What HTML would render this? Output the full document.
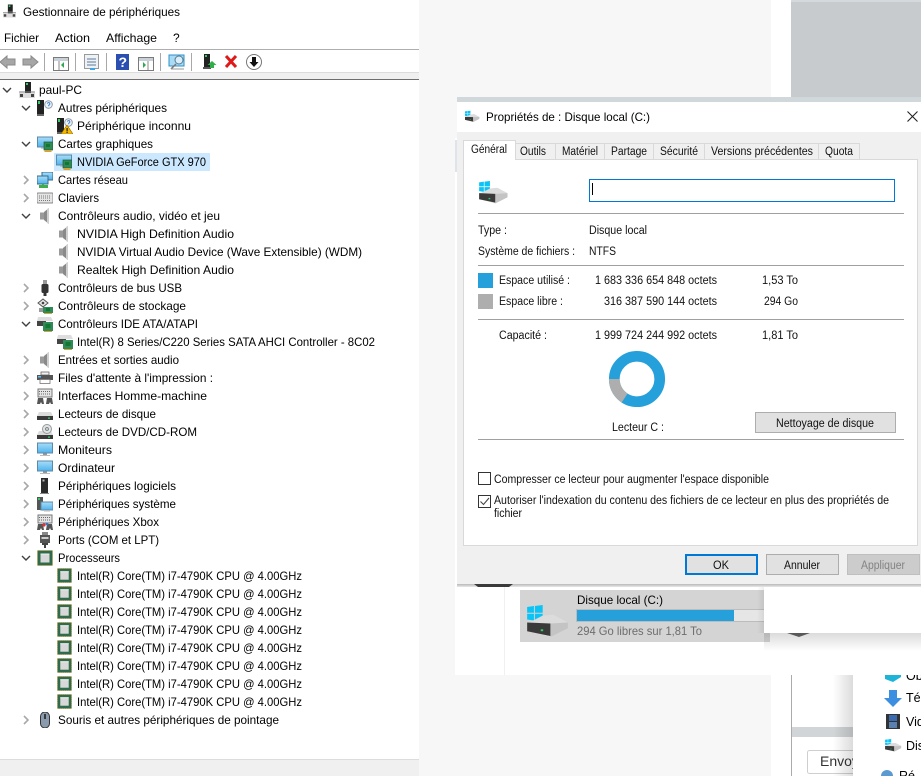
<!DOCTYPE html>
<html lang="fr"><head><meta charset="utf-8"><title>Gestionnaire de périphériques</title>
<style>
html,body{margin:0;padding:0;background:#fff;width:921px;height:776px;overflow:hidden}
svg{display:block;position:absolute;left:0;top:0}
text{font-family:"Liberation Sans",sans-serif;font-size:12px;fill:#000}
.d{font-size:11.5px;fill:#111}
</style></head><body>
<svg width="921" height="776" viewBox="0 0 921 776" xmlns="http://www.w3.org/2000/svg">
<defs>
<linearGradient id="sh" x1="0" y1="0" x2="0" y2="1"><stop offset="0" stop-color="#000" stop-opacity=".14"/><stop offset="1" stop-color="#000" stop-opacity="0"/></linearGradient>
<linearGradient id="shx" x1="0" y1="0" x2="1" y2="0"><stop offset="0" stop-color="#000" stop-opacity="0"/><stop offset="1" stop-color="#000" stop-opacity=".14"/></linearGradient>
<linearGradient id="band" x1="0" y1="0" x2="0" y2="1"><stop offset="0" stop-color="#b8b8b8"/><stop offset="1" stop-color="#e8e8e8"/></linearGradient>
<linearGradient id="scr" x1="0" y1="0" x2="0" y2="1"><stop offset="0" stop-color="#a8ddf8"/><stop offset="1" stop-color="#4fb3ee"/></linearGradient>
<symbol id="o" viewBox="0 0 10 10"><path d="M1 3l4 4 4-4" fill="none" stroke="#404040" stroke-width="1.400"/></symbol>
<symbol id="c" viewBox="0 0 10 10"><path d="M3 1l4 4-4 4" fill="none" stroke="#a8a8a8" stroke-width="1.600"/></symbol>
<symbol id="pc" viewBox="0 0 16 16"><rect x="6" y="0" width="6" height="9" fill="#222"/><rect x="7" y="1" width="2" height="2" fill="#3c6"/><path d="M0 10q0-1 1-1h14q1 0 1 1v6H0z" fill="#ddd"/><path d="M0 9.500h16v1H0z" fill="#999"/><rect x="1" y="12" width="3" height="3" fill="#444"/><rect x="12" y="12" width="3" height="3" fill="#444"/><rect x="6" y="9" width="6" height="2" fill="#555"/></symbol>
<symbol id="unk" viewBox="0 0 16 16"><rect x="0" y="0" width="7" height="14" fill="#222"/><rect x="1" y="1" width="2" height="3" fill="#3c6"/><rect x="0" y="14" width="7" height="2" fill="#666"/><circle cx="11.500" cy="4.500" r="3.800" fill="#eef3f8" stroke="#8a9aae"/><path d="M10.300 3.600a1.300 1.300 0 1 1 1.400 1.600V6.300" fill="none" stroke="#3a78c8" stroke-width=".9"/></symbol>
<symbol id="unkw" viewBox="0 0 16 16"><use href="#unk" width="16" height="16"/><path d="M10 7l6 9H4z" fill="#f5b800" stroke="#8a6a00" stroke-width=".6"/><rect x="9.500" y="10" width="1.200" height="3.200" fill="#222"/><rect x="9.500" y="13.800" width="1.200" height="1.200" fill="#222"/></symbol>
<symbol id="gpu" viewBox="0 0 16 16"><rect x=".5" y="1" width="15" height="10" fill="url(#scr)" stroke="#5a8aa8"/><rect x="4" y="11" width="5" height="1.500" fill="#9aa"/><rect x="7" y="6" width="9" height="8" fill="#2f8a58" stroke="#1d5c3a" stroke-width=".7"/><rect x="9" y="8" width="4" height="3" fill="#173"/><path d="M7.500 14h7v2h-7z" fill="#d2a43a"/></symbol>
<symbol id="net" viewBox="0 0 16 16"><rect x="5" y="0" width="11" height="8" fill="url(#scr)" stroke="#3a6a88"/><rect x="0" y="4" width="11" height="8" fill="url(#scr)" stroke="#3a6a88"/><path d="M5 12h2v1h4v3H2v-3h3z" fill="#3cae50"/></symbol>
<symbol id="kbd" viewBox="0 0 16 16"><rect x="0" y="3" width="16" height="10" rx="1" fill="#e4e4e4" stroke="#8a8a8a"/><path d="M2 6h12M2 8h12M2 10.500h12" stroke="#777" stroke-width="1" stroke-dasharray="1 1"/></symbol>
<symbol id="spk" viewBox="0 0 16 16"><path d="M3 4.500h4v7H3z" fill="#9a9a9a"/><path d="M7 4l5-4v16l-5-4z" fill="#8a8a8a"/><path d="M10 1l2-1v16l-2-1z" fill="#cfcfcf"/></symbol>
<symbol id="usb" viewBox="0 0 16 16"><rect x="6" y="0" width="4" height="4" fill="#999"/><rect x="4.500" y="4" width="7" height="9" rx="1.500" fill="#333"/><rect x="6.500" y="13" width="3" height="3" fill="#333"/></symbol>
<symbol id="stor" viewBox="0 0 16 16"><path d="M1 5l5-4 5 4-5 4z" fill="#e6e6e6" stroke="#555"/><circle cx="6" cy="5" r="1.300" fill="#444"/><rect x="6" y="9" width="10" height="6" fill="#2f8a58"/><rect x="9" y="10" width="4" height="3" fill="#173"/><path d="M7 15h8v1H7z" fill="#d2a43a"/><rect x="2" y="10" width="4" height="4" fill="#999"/></symbol>
<symbol id="ide" viewBox="0 0 16 16"><path d="M1 1h13l2 4H0z" fill="#ddd"/><rect x="0" y="5" width="9" height="5" fill="#444"/><rect x="6" y="6" width="10" height="9" fill="#2f8a58"/><rect x="8.500" y="8" width="5" height="4" fill="#173"/><path d="M7 15h8v1H7z" fill="#d2a43a"/></symbol>
<symbol id="prn" viewBox="0 0 16 16"><rect x="4" y="2" width="8" height="3" fill="#f2f2f2" stroke="#666" stroke-width=".8"/><rect x="0" y="5" width="16" height="5" fill="#555"/><rect x="1" y="6" width="3" height="1.500" fill="#5bc0ee"/><rect x="3" y="9.500" width="10" height="4" fill="#fff" stroke="#777" stroke-width=".8"/></symbol>
<symbol id="hid" viewBox="0 0 16 16"><rect x="1" y="1" width="14" height="8" fill="#e4e4e4" stroke="#777"/><path d="M2 3.500h12M2 6h12" stroke="#666" stroke-dasharray="1 1"/><path d="M1 10h5l1 6H5l-1-2-1 2H0zM10 10h5l1 6h-2l-1-2-1 2H9z" fill="#555"/></symbol>
<symbol id="xbox" viewBox="0 0 16 16"><use href="#hid" width="16" height="16"/><circle cx="7" cy="11" r="1.600" fill="#d33"/><circle cx="10" cy="10" r="1.400" fill="#37c"/></symbol>
<symbol id="hdd" viewBox="0 0 16 16"><path d="M2 6h12l2 4H0z" fill="#dcdcdc"/><rect x="0" y="10" width="16" height="4" fill="#3a3a3a"/><rect x="11" y="11.500" width="2" height="1.300" fill="#3c6"/></symbol>
<symbol id="dvd" viewBox="0 0 16 16"><use href="#hdd" width="16" height="16" y="1"/><circle cx="10" cy="5" r="4.500" fill="#dfe6e8" stroke="#999"/><circle cx="10" cy="5" r="1.400" fill="#fff" stroke="#777"/></symbol>
<symbol id="mon" viewBox="0 0 16 16"><rect x=".5" y="1" width="15" height="10" fill="url(#scr)" stroke="#5a8aa8"/><rect x="6" y="11.500" width="4" height="1.500" fill="#999"/><rect x="3" y="13" width="10" height="1" fill="#bbb"/></symbol>
<symbol id="soft" viewBox="0 0 16 16"><rect x="4" y="0" width="7" height="15" fill="#2a2a2a"/><rect x="5.500" y="1.500" width="2" height="2" fill="#bbb"/><rect x="3" y="15" width="9" height="1" fill="#888"/></symbol>
<symbol id="sys" viewBox="0 0 16 16"><rect x="0" y="1" width="6" height="13" fill="#555"/><rect x="1" y="2" width="2" height="2" fill="#3c6"/><rect x="4" y="6" width="12" height="8" fill="url(#scr)" stroke="#5a8aa8"/><rect x="7" y="14" width="6" height="1.500" fill="#bbb"/></symbol>
<symbol id="port" viewBox="0 0 16 16"><rect x="5" y="0" width="6" height="3" fill="#888"/><rect x="3" y="3" width="10" height="8" fill="#555"/><rect x="4.500" y="5" width="7" height="2" fill="#ccc"/><path d="M5 11h6v2H9v3H7v-3H5z" fill="#444"/></symbol>
<symbol id="cpu" viewBox="0 0 16 16"><rect x=".5" y=".5" width="15" height="15" fill="#2f6b4c" stroke="#b8963c" stroke-dasharray="1 1"/><rect x="3.500" y="3.500" width="9" height="9" fill="#d8d8d8"/><rect x="3.500" y="3.500" width="9" height="1" fill="#f2f2f2"/></symbol>
<symbol id="mouse" viewBox="0 0 16 16"><rect x="3.500" y="0" width="9" height="16" rx="4.500" fill="#8b9bae" stroke="#333"/><rect x="7.200" y="2" width="1.600" height="5" fill="#222"/></symbol>
<symbol id="win" viewBox="0 0 44 34"><path d="M0 2l7-1v7H0zM8 1l8-1v8H8zM0 9h7v7l-7-1zM8 9h8v8l-8-1z" fill="#0cc3f5"/><path d="M16 11l11-1 15 8v6L24 33 0 27v-8z" fill="#dcdcdc"/><path d="M0 18l24 1v13L0 27z" fill="#3a3a3a"/><path d="M24 19l18-1v6L24 33z" fill="#c4c4c4"/><rect x="14" y="25" width="2.500" height="2" fill="#3c6"/></symbol>
</defs>

<!-- backgrounds -->
<rect width="921" height="776" fill="#fff"/>
<rect x="419" y="0" width="352" height="776" fill="#f7f7f7"/>
<rect x="791" y="0" width="130" height="98" fill="#c8cbce"/>
<rect x="791" y="0" width="130" height="2" fill="#d4d9dd"/>

<!-- device manager chrome -->
<rect x="0" y="49" width="419" height="1" fill="#aeaeae"/>
<rect x="0" y="72" width="419" height="7" fill="#f0f0f0"/>
<rect x="0" y="72" width="419" height="1" fill="#dcdcdc"/>
<rect x="0" y="79" width="419" height="1" fill="#6e6e6e"/>
<rect x="0" y="759" width="419" height="1" fill="#dcdcdc"/>
<rect x="0" y="760" width="419" height="16" fill="#f0f0f0"/>

<use href="#pc" x="3" y="3" width="13" height="16"/>
<text x="23" y="16" textLength="157" lengthAdjust="spacingAndGlyphs">Gestionnaire de périphériques</text>
<text x="4" y="42" textLength="35" lengthAdjust="spacingAndGlyphs">Fichier</text>
<text x="55" y="42" textLength="35" lengthAdjust="spacingAndGlyphs">Action</text>
<text x="106" y="42" textLength="51" lengthAdjust="spacingAndGlyphs">Affichage</text>
<text x="173" y="42">?</text>

<!-- toolbar -->
<path d="M0 62l7-6v3h8v6H7v3z" fill="#a6a6a6" stroke="#8a8a8a"/>
<path d="M38 62l-7-6v3h-8v6h8v3z" fill="#a6a6a6" stroke="#8a8a8a"/>
<g fill="#a8a8a8"><rect x="44" y="53" width="1" height="18"/><rect x="75" y="53" width="1" height="18"/><rect x="106" y="53" width="1" height="18"/><rect x="160" y="53" width="1" height="18"/><rect x="191" y="53" width="1" height="18"/></g>
<rect x="53.500" y="57.500" width="15" height="13" fill="#fff" stroke="#7a7a7a"/><rect x="54" y="58" width="14" height="3" fill="#c8d0d8"/><path d="M64 62v6l-3-3z" fill="#2fa84f"/><path d="M59 61v9" stroke="#888"/>
<rect x="84.500" y="54.500" width="14" height="14" fill="#eef2f6" stroke="#9a9a9a"/><path d="M87 59h9M87 62h9M87 65h9" stroke="#5a7a9a"/><rect x="90" y="68" width="5" height="2" fill="#3aa6e8"/>
<rect x="116" y="54" width="13" height="16" fill="#2b4fb0"/><text x="118.500" y="67" style="font-size:14px;font-weight:bold;fill:#fff">?</text>
<rect x="138.500" y="57.500" width="15" height="13" fill="#fff" stroke="#7a7a7a"/><rect x="139" y="58" width="14" height="3" fill="#c8d0d8"/><path d="M143 62v6l3-3z" fill="#2fa84f"/><path d="M148 61v9" stroke="#888"/>
<rect x="169" y="55" width="15" height="11" fill="#a8dcf6" stroke="#2e90c8"/><circle cx="179" cy="60" r="4" fill="#d8eefa" stroke="#5a7a8a"/><path d="M176 64l-5 5" stroke="#777" stroke-width="1.500"/><path d="M171 69h13" stroke="#999"/>
<rect x="204" y="54" width="6" height="13" fill="#222"/><rect x="205" y="55" width="2" height="2" fill="#3c6"/><rect x="203" y="67" width="8" height="2" fill="#555"/><path d="M212 61l4.500 4h-2.500v3h-4v-3h-2.500z" fill="#2fae4a"/>
<path d="M226 56l10 11M236 56l-10 11" stroke="#e01818" stroke-width="3"/>
<circle cx="254" cy="62" r="7.500" fill="#fff" stroke="#777"/><path d="M252 57h4v5h2.500l-4.500 5-4.500-5h2.500z" fill="#111"/>

<!-- selection -->
<rect x="54" y="153" width="156" height="18" fill="#cce8ff"/>

<!-- chevrons -->
<use href="#o" x="2" y="85" width="10" height="10"/>
<use href="#o" x="21" y="103" width="10" height="10"/>
<use href="#o" x="21" y="139" width="10" height="10"/>
<use href="#c" x="21" y="175" width="10" height="10"/>
<use href="#c" x="21" y="193" width="10" height="10"/>
<use href="#o" x="21" y="211" width="10" height="10"/>
<use href="#c" x="21" y="283" width="10" height="10"/>
<use href="#c" x="21" y="301" width="10" height="10"/>
<use href="#o" x="21" y="319" width="10" height="10"/>
<use href="#c" x="21" y="355" width="10" height="10"/>
<use href="#c" x="21" y="373" width="10" height="10"/>
<use href="#c" x="21" y="391" width="10" height="10"/>
<use href="#c" x="21" y="409" width="10" height="10"/>
<use href="#c" x="21" y="427" width="10" height="10"/>
<use href="#c" x="21" y="445" width="10" height="10"/>
<use href="#c" x="21" y="463" width="10" height="10"/>
<use href="#c" x="21" y="481" width="10" height="10"/>
<use href="#c" x="21" y="499" width="10" height="10"/>
<use href="#c" x="21" y="517" width="10" height="10"/>
<use href="#c" x="21" y="535" width="10" height="10"/>
<use href="#o" x="21" y="553" width="10" height="10"/>
<use href="#c" x="21" y="715" width="10" height="10"/>

<!-- tree icons -->
<use href="#pc" x="19" y="82" width="16" height="16"/>
<use href="#unk" x="37" y="100" width="16" height="16"/>
<use href="#unkw" x="57" y="118" width="16" height="16"/>
<use href="#gpu" x="37" y="136" width="16" height="16"/>
<use href="#gpu" x="56" y="154" width="16" height="16"/>
<use href="#net" x="37" y="172" width="16" height="16"/>
<use href="#kbd" x="37" y="190" width="16" height="16"/>
<use href="#spk" x="37" y="208" width="16" height="16"/>
<use href="#spk" x="56" y="226" width="16" height="16"/>
<use href="#spk" x="56" y="244" width="16" height="16"/>
<use href="#spk" x="56" y="262" width="16" height="16"/>
<use href="#usb" x="37" y="280" width="16" height="16"/>
<use href="#stor" x="37" y="298" width="16" height="16"/>
<use href="#ide" x="37" y="316" width="16" height="16"/>
<use href="#ide" x="57" y="334" width="16" height="16"/>
<use href="#spk" x="37" y="352" width="16" height="16"/>
<use href="#prn" x="37" y="370" width="16" height="16"/>
<use href="#hid" x="37" y="388" width="16" height="16"/>
<use href="#hdd" x="37" y="406" width="16" height="16"/>
<use href="#dvd" x="37" y="424" width="16" height="16"/>
<use href="#mon" x="37" y="442" width="16" height="16"/>
<use href="#mon" x="37" y="460" width="16" height="16"/>
<use href="#soft" x="37" y="478" width="16" height="16"/>
<use href="#sys" x="37" y="496" width="16" height="16"/>
<use href="#xbox" x="37" y="514" width="16" height="16"/>
<use href="#port" x="37" y="532" width="16" height="16"/>
<use href="#cpu" x="37" y="550" width="16" height="16"/>
<use href="#cpu" x="57" y="568" width="15" height="15"/>
<use href="#cpu" x="57" y="586" width="15" height="15"/>
<use href="#cpu" x="57" y="604" width="15" height="15"/>
<use href="#cpu" x="57" y="622" width="15" height="15"/>
<use href="#cpu" x="57" y="640" width="15" height="15"/>
<use href="#cpu" x="57" y="658" width="15" height="15"/>
<use href="#cpu" x="57" y="676" width="15" height="15"/>
<use href="#cpu" x="57" y="694" width="15" height="15"/>
<use href="#mouse" x="37" y="712" width="16" height="16"/>

<!-- tree labels -->
<text x="39" y="94" textLength="43" lengthAdjust="spacingAndGlyphs">paul-PC</text>
<text x="58" y="112" textLength="109" lengthAdjust="spacingAndGlyphs">Autres périphériques</text>
<text x="77" y="130" textLength="114" lengthAdjust="spacingAndGlyphs">Périphérique inconnu</text>
<text x="58" y="148" textLength="95" lengthAdjust="spacingAndGlyphs">Cartes graphiques</text>
<text x="77" y="166" textLength="129" lengthAdjust="spacingAndGlyphs">NVIDIA GeForce GTX 970</text>
<text x="58" y="184" textLength="70" lengthAdjust="spacingAndGlyphs">Cartes réseau</text>
<text x="58" y="202" textLength="41" lengthAdjust="spacingAndGlyphs">Claviers</text>
<text x="58" y="220" textLength="162" lengthAdjust="spacingAndGlyphs">Contrôleurs audio, vidéo et jeu</text>
<text x="77" y="238" textLength="157" lengthAdjust="spacingAndGlyphs">NVIDIA High Definition Audio</text>
<text x="77" y="256" textLength="285" lengthAdjust="spacingAndGlyphs">NVIDIA Virtual Audio Device (Wave Extensible) (WDM)</text>
<text x="77" y="274" textLength="157" lengthAdjust="spacingAndGlyphs">Realtek High Definition Audio</text>
<text x="58" y="292" textLength="124" lengthAdjust="spacingAndGlyphs">Contrôleurs de bus USB</text>
<text x="58" y="310" textLength="128" lengthAdjust="spacingAndGlyphs">Contrôleurs de stockage</text>
<text x="58" y="328" textLength="140" lengthAdjust="spacingAndGlyphs">Contrôleurs IDE ATA/ATAPI</text>
<text x="77" y="346" textLength="298" lengthAdjust="spacingAndGlyphs">Intel(R) 8 Series/C220 Series SATA AHCI Controller - 8C02</text>
<text x="58" y="364" textLength="121" lengthAdjust="spacingAndGlyphs">Entrées et sorties audio</text>
<text x="58" y="382" textLength="155" lengthAdjust="spacingAndGlyphs">Files d'attente à l'impression :</text>
<text x="58" y="400" textLength="149" lengthAdjust="spacingAndGlyphs">Interfaces Homme-machine</text>
<text x="58" y="418" textLength="98" lengthAdjust="spacingAndGlyphs">Lecteurs de disque</text>
<text x="58" y="436" textLength="139" lengthAdjust="spacingAndGlyphs">Lecteurs de DVD/CD-ROM</text>
<text x="58" y="454" textLength="54" lengthAdjust="spacingAndGlyphs">Moniteurs</text>
<text x="58" y="472" textLength="57" lengthAdjust="spacingAndGlyphs">Ordinateur</text>
<text x="58" y="490" textLength="118" lengthAdjust="spacingAndGlyphs">Périphériques logiciels</text>
<text x="58" y="508" textLength="118" lengthAdjust="spacingAndGlyphs">Périphériques système</text>
<text x="58" y="526" textLength="101" lengthAdjust="spacingAndGlyphs">Périphériques Xbox</text>
<text x="58" y="544" textLength="101" lengthAdjust="spacingAndGlyphs">Ports (COM et LPT)</text>
<text x="58" y="562" textLength="62" lengthAdjust="spacingAndGlyphs">Processeurs</text>
<text x="77" y="580" textLength="225" lengthAdjust="spacingAndGlyphs">Intel(R) Core(TM) i7-4790K CPU @ 4.00GHz</text>
<text x="77" y="598" textLength="225" lengthAdjust="spacingAndGlyphs">Intel(R) Core(TM) i7-4790K CPU @ 4.00GHz</text>
<text x="77" y="616" textLength="225" lengthAdjust="spacingAndGlyphs">Intel(R) Core(TM) i7-4790K CPU @ 4.00GHz</text>
<text x="77" y="634" textLength="225" lengthAdjust="spacingAndGlyphs">Intel(R) Core(TM) i7-4790K CPU @ 4.00GHz</text>
<text x="77" y="652" textLength="225" lengthAdjust="spacingAndGlyphs">Intel(R) Core(TM) i7-4790K CPU @ 4.00GHz</text>
<text x="77" y="670" textLength="225" lengthAdjust="spacingAndGlyphs">Intel(R) Core(TM) i7-4790K CPU @ 4.00GHz</text>
<text x="77" y="688" textLength="225" lengthAdjust="spacingAndGlyphs">Intel(R) Core(TM) i7-4790K CPU @ 4.00GHz</text>
<text x="77" y="706" textLength="225" lengthAdjust="spacingAndGlyphs">Intel(R) Core(TM) i7-4790K CPU @ 4.00GHz</text>
<text x="58" y="724" textLength="221" lengthAdjust="spacingAndGlyphs">Souris et autres périphériques de pointage</text>

<!-- lower right window underneath -->
<rect x="771" y="675" width="21" height="101" fill="#fff"/>
<rect x="792" y="675" width="129" height="101" fill="#fff"/>
<rect x="791" y="675" width="1" height="101" fill="#ababab"/>
<rect x="792" y="727" width="61" height="10" fill="#d2d5d7"/>
<rect x="807.500" y="750.500" width="60" height="23" rx="2" fill="#fff" stroke="#cfcfcf"/>
<text x="820" y="766" style="font-size:14px;fill:#333">Envoyer</text>
<rect x="833" y="675" width="20" height="101" fill="url(#shx)"/>
<rect x="853" y="675" width="68" height="101" fill="#fff"/>
<path d="M885 675h16v2l-8 5-8-3z" fill="#1eb4d8"/>
<text x="906" y="680" style="font-size:12.500px">Ob</text>
<path d="M889 690h8v8h5l-9 9-9-9h5z" fill="#3c8fe0"/>
<text x="906" y="702" style="font-size:12.500px">Tél</text>
<rect x="886" y="714" width="14" height="15" fill="#333"/><rect x="889" y="715" width="8" height="6" fill="#3a6ab0"/><rect x="889" y="722" width="8" height="6" fill="#5a80b0"/>
<text x="906" y="726" style="font-size:12.500px">Vid</text>
<use href="#win" x="885" y="739" width="17" height="13"/>
<text x="906" y="750" style="font-size:12.500px">Dis</text>
<circle cx="887" cy="776" r="6" fill="#5a9ad0"/>
<text x="899" y="780" style="font-size:12.500px">Ré</text>

<!-- explorer strip under dialog -->
<rect x="455" y="584" width="466" height="91" fill="#fff"/>
<rect x="504" y="587" width="1" height="88" fill="#f0f0f0"/>
<rect x="520" y="590" width="250" height="52" fill="#d4d4d4"/>
<use href="#win" x="527" y="605" width="43" height="33"/>
<text x="577" y="604" textLength="86" lengthAdjust="spacingAndGlyphs">Disque local (C:)</text>
<rect x="576.500" y="609.500" width="193" height="12" fill="#e6e6e6" stroke="#bcbcbc"/>
<rect x="577" y="610" width="157" height="11" fill="#26a0da"/>
<text x="577" y="635" textLength="125" lengthAdjust="spacingAndGlyphs" style="fill:#6d6d6d">294 Go libres sur 1,81 To</text>
<path d="M787 633h23l-11 4z" fill="#666"/>
<rect x="757" y="587" width="7" height="46" fill="url(#shx)" opacity=".5"/>
<rect x="764" y="633" width="157" height="18" fill="url(#sh)"/>
<rect x="764" y="584" width="157" height="49" fill="#fff"/>

<!-- dialog -->
<rect x="455" y="138" width="2" height="446" fill="#fff"/>
<rect x="455" y="140" width="2" height="32" fill="#dfe4ea"/>
<rect x="457" y="97" width="464" height="487" fill="#f0f0f0"/>
<rect x="457" y="97" width="464" height="5" fill="#d0d8dc"/>
<rect x="457" y="102" width="464" height="30" fill="#fff"/>
<use href="#win" x="465" y="110" width="15" height="13"/>
<text x="486" y="121" textLength="164" lengthAdjust="spacingAndGlyphs">Propriétés de : Disque local (C:)</text>
<path d="M907.500 111.500l10 10M917.500 111.500l-10 10" stroke="#222" stroke-width="1.100" fill="none"/>

<!-- tab panel -->
<rect x="463.500" y="159.500" width="454" height="386" fill="#fff" stroke="#d9d9d9"/>
<g fill="#f0f0f0" stroke="#d9d9d9">
<rect x="515.500" y="143.500" width="40" height="16"/>
<rect x="555.500" y="143.500" width="49" height="16"/>
<rect x="604.500" y="143.500" width="49" height="16"/>
<rect x="653.500" y="143.500" width="51" height="16"/>
<rect x="704.500" y="143.500" width="114" height="16"/>
<rect x="818.500" y="143.500" width="41" height="16"/>
</g>
<path d="M463.500 160V140.500H515.500V160" fill="#fff" stroke="#d9d9d9"/>
<rect x="464" y="158" width="51" height="3" fill="#fff"/>
<text class="d" x="471" y="153" textLength="36" lengthAdjust="spacingAndGlyphs">Général</text>
<text class="d" x="520" y="155" textLength="26" lengthAdjust="spacingAndGlyphs">Outils</text>
<text class="d" x="562" y="155" textLength="36" lengthAdjust="spacingAndGlyphs">Matériel</text>
<text class="d" x="611" y="155" textLength="36" lengthAdjust="spacingAndGlyphs">Partage</text>
<text class="d" x="660" y="155" textLength="38" lengthAdjust="spacingAndGlyphs">Sécurité</text>
<text class="d" x="711" y="155" textLength="102" lengthAdjust="spacingAndGlyphs">Versions précédentes</text>
<text class="d" x="825" y="155" textLength="28" lengthAdjust="spacingAndGlyphs">Quota</text>

<use href="#win" x="479" y="181" width="30" height="23"/>
<rect x="589.500" y="179.500" width="305" height="22" fill="#fff" stroke="#0078d7"/>
<rect x="592" y="183" width="1" height="12" fill="#000"/>

<g fill="#a0a0a0">
<rect x="478" y="213" width="426" height="1"/>
<rect x="478" y="265" width="426" height="1"/>
<rect x="478" y="319" width="426" height="1"/>
<rect x="478" y="439" width="426" height="1"/>
</g>
<text class="d" x="478" y="234" textLength="29" lengthAdjust="spacingAndGlyphs">Type :</text>
<text class="d" x="589" y="234" textLength="58" lengthAdjust="spacingAndGlyphs">Disque local</text>
<text class="d" x="478" y="255" textLength="97" lengthAdjust="spacingAndGlyphs">Système de fichiers :</text>
<text class="d" x="589" y="255" textLength="27" lengthAdjust="spacingAndGlyphs">NTFS</text>

<rect x="478" y="273" width="15" height="15" fill="#26a0da"/>
<rect x="478" y="294" width="15" height="15" fill="#aeaeae"/>
<text class="d" x="499" y="284" textLength="71" lengthAdjust="spacingAndGlyphs">Espace utilisé :</text>
<text class="d" x="595" y="284" textLength="122" lengthAdjust="spacingAndGlyphs">1 683 336 654 848 octets</text>
<text class="d" x="762" y="284" textLength="36" lengthAdjust="spacingAndGlyphs">1,53 To</text>
<text class="d" x="499" y="305" textLength="64" lengthAdjust="spacingAndGlyphs">Espace libre :</text>
<text class="d" x="604" y="305" textLength="113" lengthAdjust="spacingAndGlyphs">316 387 590 144 octets</text>
<text class="d" x="764" y="305" textLength="34" lengthAdjust="spacingAndGlyphs">294 Go</text>
<text class="d" x="499" y="339" textLength="48" lengthAdjust="spacingAndGlyphs">Capacité :</text>
<text class="d" x="595" y="339" textLength="122" lengthAdjust="spacingAndGlyphs">1 999 724 244 992 octets</text>
<text class="d" x="762" y="339" textLength="36" lengthAdjust="spacingAndGlyphs">1,81 To</text>

<circle cx="637" cy="379" r="22.700" fill="none" stroke="#26a0da" stroke-width="10.700"/>
<path d="M614.300 379A22.700 22.700 0 0 0 624.600 398" fill="none" stroke="#aeaeae" stroke-width="10.700"/>

<text class="d" x="612" y="431" textLength="52" lengthAdjust="spacingAndGlyphs">Lecteur C :</text>
<rect x="755.500" y="412.500" width="140" height="20" fill="#e1e1e1" stroke="#adadad"/>
<text class="d" x="776" y="427" textLength="98" lengthAdjust="spacingAndGlyphs">Nettoyage de disque</text>

<rect x="478.500" y="472.500" width="12" height="12" fill="#fff" stroke="#333"/>
<text class="d" x="494" y="483" textLength="275" lengthAdjust="spacingAndGlyphs">Compresser ce lecteur pour augmenter l'espace disponible</text>
<rect x="478.500" y="495.500" width="12" height="12" fill="#fff" stroke="#333"/>
<path d="M480.500 501.500l3 3 5.500-6.500" fill="none" stroke="#444" stroke-width="1.100"/>
<text class="d" x="494" y="504" textLength="395" lengthAdjust="spacingAndGlyphs">Autoriser l'indexation du contenu des fichiers de ce lecteur en plus des propriétés de</text>
<text class="d" x="494" y="517" textLength="28" lengthAdjust="spacingAndGlyphs">fichier</text>

<rect x="686" y="555" width="71" height="19" fill="#e1e1e1" stroke="#0078d7" stroke-width="2"/>
<text class="d" x="713" y="569" textLength="16" lengthAdjust="spacingAndGlyphs">OK</text>
<rect x="766.500" y="554.500" width="72" height="20" fill="#e1e1e1" stroke="#adadad"/>
<text class="d" x="784" y="569" textLength="36" lengthAdjust="spacingAndGlyphs">Annuler</text>
<rect x="847.500" y="554.500" width="72" height="20" fill="#cccccc" stroke="#bfbfbf"/>
<text class="d" x="861" y="569" textLength="44" lengthAdjust="spacingAndGlyphs" style="fill:#838383">Appliquer</text>
<rect x="457" y="584" width="464" height="3" fill="url(#band)"/>
<path d="M474 584h39l-4 3h-31z" fill="#3a3a3a"/>
</svg>
</body></html>
